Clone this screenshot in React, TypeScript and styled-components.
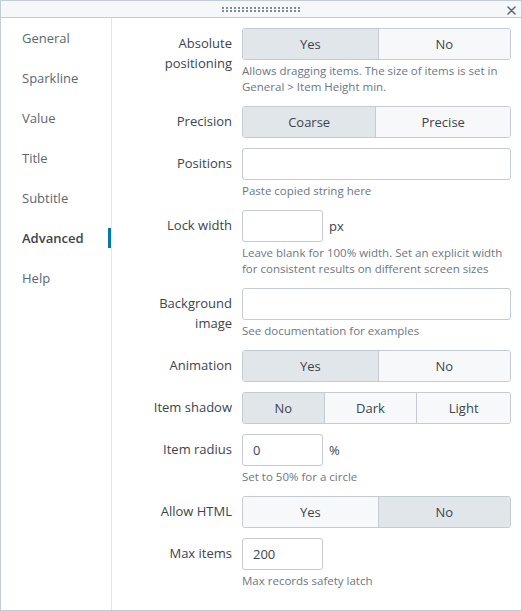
import React from "react";
import styled, { createGlobalStyle, css } from "styled-components";

const Global = createGlobalStyle`
  html, body { margin: 0; padding: 0; background: #fff; }
  body { font-family: "Open Sans", "Liberation Sans", sans-serif; }
  * { box-sizing: border-box; }
`;

const Panel = styled.div`
  width: 522px;
  height: 611px;
  border: 1px solid #c3cbd4;
  display: flex;
  flex-direction: column;
  background: #fff;
  overflow: hidden;
`;

const Header = styled.div`
  height: 17px;
  flex: none;
  background: #f5f7f9;
  border-bottom: 1px solid #c3cbd4;
  display: flex;
  align-items: center;
  justify-content: center;
  position: relative;
`;

const Grip = styled.div`
  width: 78px;
  height: 6px;
  background-image: linear-gradient(90deg, #7e8894 2px, transparent 2px);
  background-size: 4px 3px;
  mask: linear-gradient(#000 2px, transparent 2px) 0 0 / 100% 3px repeat-y;
  -webkit-mask: linear-gradient(#000 2px, transparent 2px) 0 0 / 100% 3px repeat-y;
  margin-top: 1px;
`;

const Close = styled.button`
  position: absolute;
  right: 4px;
  top: 3px;
  width: 12px;
  height: 12px;
  padding: 0;
  border: none;
  background: transparent;
  display: flex;
  align-items: center;
  justify-content: center;
`;

const Body = styled.div`
  flex: 1;
  display: flex;
  min-height: 0;
`;

const Sidebar = styled.nav`
  width: 111px;
  flex: none;
  border-right: 1px solid #e1e6eb;
  display: flex;
  flex-direction: column;
`;

const NavItem = styled.div<{ $active?: boolean }>`
  height: 40px;
  display: flex;
  align-items: center;
  padding-left: 21px;
  font-size: 13px;
  color: ${(p) => (p.$active ? "#3c444d" : "#5c6773")};
  font-weight: ${(p) => (p.$active ? 600 : 400)};
  position: relative;
  ${(p) =>
    p.$active &&
    css`
      &::after {
        content: "";
        position: absolute;
        right: 0;
        top: 10px;
        width: 3px;
        height: 20px;
        background: #0877a6;
      }
    `}
`;

const Content = styled.div`
  flex: 1;
  padding: 10px 10px 0 10px;
  display: flex;
  flex-direction: column;
`;

const Row = styled.div<{ $help?: boolean }>`
  display: flex;
  gap: 10px;
  margin-bottom: ${(p) => (p.$help ? "11px" : "10px")};
`;

const Label = styled.div`
  width: 110px;
  flex: none;
  text-align: right;
  font-size: 13px;
  line-height: 20px;
  padding-top: 5px;
  color: #3c444d;
`;

const Control = styled.div`
  flex: 1;
  min-width: 0;
  display: flex;
  flex-direction: column;
`;

const Group = styled.div`
  display: flex;
  height: 32px;
  border: 1px solid #c3cbd4;
  border-radius: 3px;
  overflow: hidden;
`;

const Seg = styled.div<{ $selected?: boolean }>`
  flex: 1 1 auto;
  display: flex;
  align-items: center;
  justify-content: center;
  font-size: 13px;
  color: #3c444d;
  background: ${(p) => (p.$selected ? "#e1e6eb" : "#f7f8fa")};
  & + & {
    border-left: 1px solid #c3cbd4;
  }
`;

const Inline = styled.div`
  display: flex;
  align-items: center;
  gap: 6px;
  font-size: 13px;
  color: #3c444d;
`;

const Input = styled.div<{ $short?: boolean }>`
  height: 32px;
  width: ${(p) => (p.$short ? "81px" : "100%")};
  border: 1px solid #c3cbd4;
  border-radius: 3px;
  background: #fff;
  padding: 0 10px;
  display: flex;
  align-items: center;
  font-size: 13px;
  color: #3c444d;
`;

const Help = styled.div`
  font-size: 11.5px;
  line-height: 16px;
  color: #6b7785;
  margin-top: 3px;
`;

const navItems = ["General", "Sparkline", "Value", "Title", "Subtitle", "Advanced", "Help"];

function Segments({ options, selected }: { options: string[]; selected: number }) {
  return (
    <Group>
      {options.map((o, i) => (
        <Seg key={o} $selected={i === selected}>
          {o}
        </Seg>
      ))}
    </Group>
  );
}

export default function App() {
  return (
    <>
      <Global />
      <Panel>
        <Header>
          <Grip />
          <Close aria-label="Close">
            <svg width="9" height="9" viewBox="0 0 9 9">
              <path d="M1 1L8 8M8 1L1 8" stroke="#5c6773" strokeWidth="1.5" strokeLinecap="round" />
            </svg>
          </Close>
        </Header>
        <Body>
          <Sidebar>
            {navItems.map((n) => (
              <NavItem key={n} $active={n === "Advanced"}>
                {n}
              </NavItem>
            ))}
          </Sidebar>
          <Content>
            <Row $help>
              <Label>
                Absolute
                <br />
                positioning
              </Label>
              <Control>
                <Segments options={["Yes", "No"]} selected={0} />
                <Help>
                  Allows dragging items. The size of items is set in
                  <br />
                  General &gt; Item Height min.
                </Help>
              </Control>
            </Row>
            <Row>
              <Label>Precision</Label>
              <Control>
                <Segments options={["Coarse", "Precise"]} selected={0} />
              </Control>
            </Row>
            <Row $help>
              <Label>Positions</Label>
              <Control>
                <Input />
                <Help>Paste copied string here</Help>
              </Control>
            </Row>
            <Row $help>
              <Label>Lock width</Label>
              <Control>
                <Inline>
                  <Input $short />
                  px
                </Inline>
                <Help>
                  Leave blank for 100% width. Set an explicit width
                  <br />
                  for consistent results on different screen sizes
                </Help>
              </Control>
            </Row>
            <Row $help>
              <Label>
                Background
                <br />
                image
              </Label>
              <Control>
                <Input />
                <Help>See documentation for examples</Help>
              </Control>
            </Row>
            <Row>
              <Label>Animation</Label>
              <Control>
                <Segments options={["Yes", "No"]} selected={0} />
              </Control>
            </Row>
            <Row>
              <Label>Item shadow</Label>
              <Control>
                <Segments options={["No", "Dark", "Light"]} selected={0} />
              </Control>
            </Row>
            <Row $help>
              <Label>Item radius</Label>
              <Control>
                <Inline>
                  <Input $short>0</Input>%
                </Inline>
                <Help>Set to 50% for a circle</Help>
              </Control>
            </Row>
            <Row>
              <Label>Allow HTML</Label>
              <Control>
                <Segments options={["Yes", "No"]} selected={1} />
              </Control>
            </Row>
            <Row $help>
              <Label>Max items</Label>
              <Control>
                <Input $short>200</Input>
                <Help>Max records safety latch</Help>
              </Control>
            </Row>
          </Content>
        </Body>
      </Panel>
    </>
  );
}
